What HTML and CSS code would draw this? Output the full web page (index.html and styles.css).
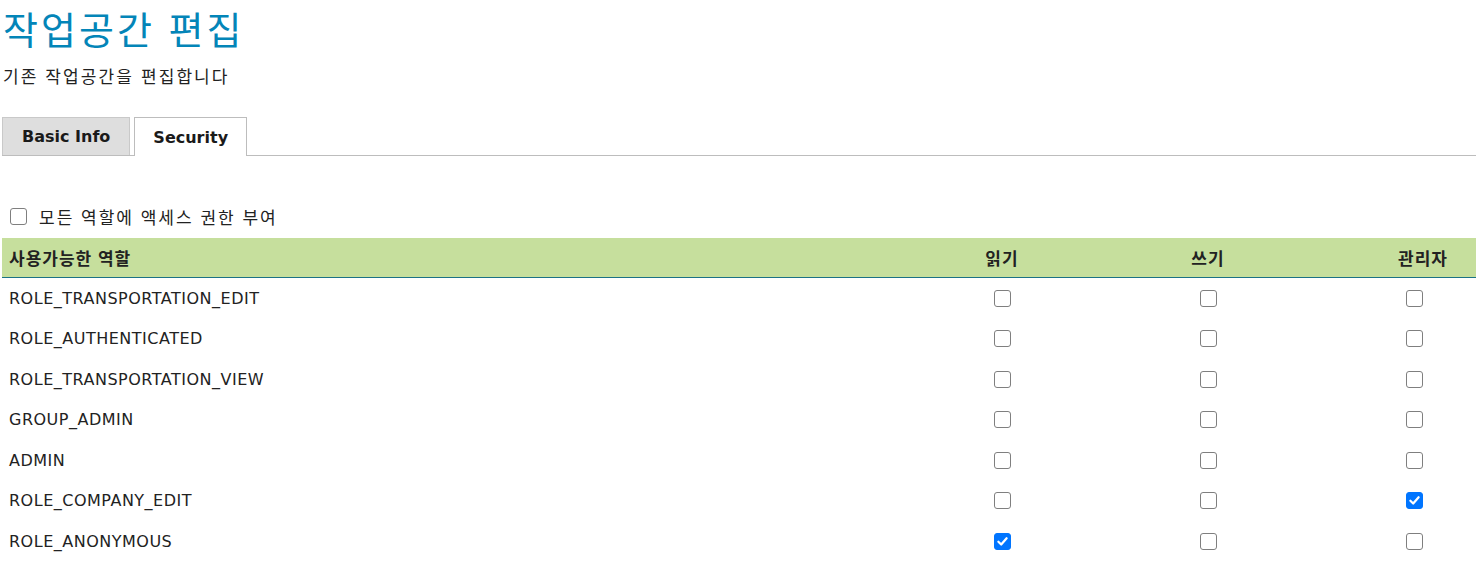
FILE: index.html
```html
<!DOCTYPE html>
<html lang="ko">
<head>
<meta charset="utf-8">
<title>작업공간 편집</title>
<link rel="stylesheet" href="styles.css">
</head>
<body>
<div class="page">
  <h1 class="title">작업공간 편집</h1>
  <p class="subtitle">기존 작업공간을 편집합니다</p>

  <div class="tabs">
    <div class="tab">Basic Info</div>
    <div class="tab active">Security</div>
  </div>

  <label class="grant-all">
    <input type="checkbox" class="cb">
    <span>모든 역할에 액세스 권한 부여</span>
  </label>

  <div class="roles">
    <div class="row head">
      <div class="cell name">사용가능한 역할</div>
      <div class="cell">읽기</div>
      <div class="cell">쓰기</div>
      <div class="cell admin">관리자</div>
    </div>
    <div class="row">
      <div class="cell name">ROLE_TRANSPORTATION_EDIT</div>
      <div class="cell"><input type="checkbox" class="cb"></div>
      <div class="cell"><input type="checkbox" class="cb"></div>
      <div class="cell"><input type="checkbox" class="cb"></div>
    </div>
    <div class="row">
      <div class="cell name">ROLE_AUTHENTICATED</div>
      <div class="cell"><input type="checkbox" class="cb"></div>
      <div class="cell"><input type="checkbox" class="cb"></div>
      <div class="cell"><input type="checkbox" class="cb"></div>
    </div>
    <div class="row">
      <div class="cell name">ROLE_TRANSPORTATION_VIEW</div>
      <div class="cell"><input type="checkbox" class="cb"></div>
      <div class="cell"><input type="checkbox" class="cb"></div>
      <div class="cell"><input type="checkbox" class="cb"></div>
    </div>
    <div class="row">
      <div class="cell name">GROUP_ADMIN</div>
      <div class="cell"><input type="checkbox" class="cb"></div>
      <div class="cell"><input type="checkbox" class="cb"></div>
      <div class="cell"><input type="checkbox" class="cb"></div>
    </div>
    <div class="row">
      <div class="cell name">ADMIN</div>
      <div class="cell"><input type="checkbox" class="cb"></div>
      <div class="cell"><input type="checkbox" class="cb"></div>
      <div class="cell"><input type="checkbox" class="cb"></div>
    </div>
    <div class="row">
      <div class="cell name">ROLE_COMPANY_EDIT</div>
      <div class="cell"><input type="checkbox" class="cb"></div>
      <div class="cell"><input type="checkbox" class="cb"></div>
      <div class="cell"><input type="checkbox" class="cb" checked></div>
    </div>
    <div class="row">
      <div class="cell name">ROLE_ANONYMOUS</div>
      <div class="cell"><input type="checkbox" class="cb" checked></div>
      <div class="cell"><input type="checkbox" class="cb"></div>
      <div class="cell"><input type="checkbox" class="cb"></div>
    </div>
  </div>
</div>
</body>
</html>
```

FILE: styles.css
```css
html, body {
  margin: 0;
  padding: 0;
  background: #ffffff;
}

body {
  font-family: "DejaVu Sans", "Noto Sans CJK KR", sans-serif;
  font-size: 16px;
  color: #222222;
}

.page {
  padding: 0 0 0 2px;
}

.title {
  margin: 0;
  padding: 0 0 0 1px;
  font-family: "Noto Sans CJK KR", sans-serif;
  font-weight: 400;
  font-size: 38px;
  line-height: 55px;
  letter-spacing: 3px;
  color: #0385b8;
}

.subtitle {
  margin: 0;
  padding: 9px 0 0 1px;
  font-family: "Noto Sans CJK KR", sans-serif;
  font-size: 17px;
  line-height: 24px;
  letter-spacing: 2.1px;
  color: #222222;
}

.tabs {
  display: flex;
  align-items: flex-end;
  gap: 4px;
  margin-top: 29px;
  border-bottom: 1px solid #bdbdbd;
  height: 38px;
}

.tab {
  box-sizing: border-box;
  height: 38px;
  padding: 0 19px;
  display: flex;
  align-items: center;
  font-weight: 700;
  font-size: 16px;
  color: #1a1a1a;
  background: #dedede;
  border: 1px solid #c9c9c9;
  border-bottom: none;
}

.tab.active {
  height: 39px;
  padding: 0 18px;
  margin-bottom: -1px;
  background: #ffffff;
  border-color: #bdbdbd;
}

.grant-all {
  display: flex;
  align-items: center;
  gap: 12px;
  margin-top: 48px;
  padding-left: 8px;
  height: 24px;
  font-family: "Noto Sans CJK KR", sans-serif;
  font-size: 17px;
  letter-spacing: 2px;
  color: #222222;
}

.cb {
  appearance: none;
  -webkit-appearance: none;
  box-sizing: border-box;
  width: 17px;
  height: 17px;
  margin: 0;
  border: 1.5px solid #7f7f7f;
  border-radius: 3px;
  background: #ffffff;
}

.cb:checked {
  border-color: #0075ff;
  background: #0075ff url("data:image/svg+xml;utf8,<svg xmlns='http://www.w3.org/2000/svg' width='16' height='16' viewBox='0 0 16 16'><path d='M3.6 8.3 L6.6 11.2 L12.4 4.6' fill='none' stroke='white' stroke-width='2.4' stroke-linecap='round' stroke-linejoin='round'/></svg>") center / 15px 15px no-repeat;
}

.roles {
  margin-top: 10px;
}

.row {
  display: grid;
  grid-template-columns: 1fr 124px 124px 124px;
  column-gap: 82px;
  align-items: center;
  height: 40.5px;
}

.row.head {
  height: 39px;
  background: #c6df9d;
  border-bottom: 1px solid #1b7285;
  font-family: "Noto Sans CJK KR", sans-serif;
  font-weight: 700;
  font-size: 17px;
  letter-spacing: 1px;
}

.cell {
  display: flex;
  justify-content: center;
  align-items: center;
}

.cell.admin {
  padding-left: 18px;
}

.cell.name {
  justify-content: flex-start;
  padding-left: 7px;
  letter-spacing: 0.5px;
}

.row.head .cell.name {
  letter-spacing: 1px;
}
```
